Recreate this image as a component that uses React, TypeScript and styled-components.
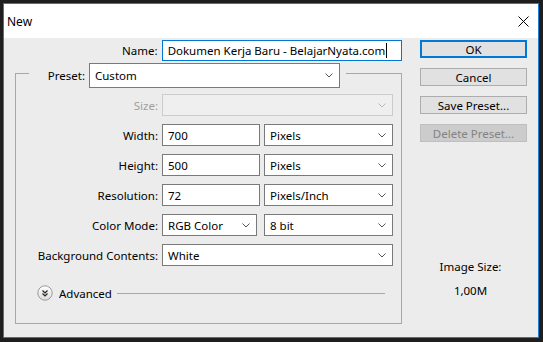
import React from "react";
import styled, { createGlobalStyle } from "styled-components";

const GlobalStyle = createGlobalStyle`
  html, body {
    margin: 0;
    padding: 0;
    background: #1e1e1e;
  }
  body {
    font-family: "Noto Sans", "Open Sans", sans-serif;
    font-size: 11.5px;
    color: #000;
  }
`;

const Frame = styled.div`
  width: 543px;
  height: 342px;
  box-sizing: border-box;
  padding: 3px 4px 4px 3px;
  background: #1e1e1e;
`;

const Dialog = styled.div`
  width: 536px;
  height: 335px;
  box-sizing: border-box;
  border: 1px solid #1a7fd4;
  background: #ececec;
  display: flex;
  flex-direction: column;
`;

const TitleBar = styled.div`
  height: 34px;
  flex-shrink: 0;
  background: #fff;
  display: flex;
  align-items: center;
  justify-content: space-between;
  padding: 0 9px 0 3px;
  font-size: 12px;
`;

const CloseIcon = styled.svg`
  width: 11px;
  height: 11px;
`;

const Body = styled.div`
  display: flex;
  padding: 1px 0 0 11px;
`;

const LeftCol = styled.div`
  width: 387px;
  display: flex;
  flex-direction: column;
`;

const Row = styled.div<{ $top?: number }>`
  display: flex;
  align-items: center;
  height: 22px;
  margin-top: ${(p) => p.$top ?? 8}px;
`;

const Label = styled.div<{ $w?: number; $disabled?: boolean }>`
  width: ${(p) => p.$w ?? 142}px;
  margin-right: 4px;
  text-align: right;
  white-space: nowrap;
  color: ${(p) => (p.$disabled ? "#a0a0a0" : "#000")};
`;

const Field = styled.div<{ $w: number; $h?: number; $focus?: boolean }>`
  width: ${(p) => p.$w}px;
  height: ${(p) => p.$h ?? 22}px;
  box-sizing: border-box;
  border: 1px solid ${(p) => (p.$focus ? "#0078d7" : "#7a7a7a")};
  background: #fff;
  display: flex;
  align-items: center;
  padding-left: 5px;
  white-space: nowrap;
`;

const Caret = styled.span`
  display: inline-block;
  width: 1px;
  height: 15px;
  margin-left: 1px;
  background: #000;
`;

const SelectBox = styled.div<{ $w: number; $h?: number; $gap?: number; $disabled?: boolean }>`
  width: ${(p) => p.$w}px;
  height: ${(p) => p.$h ?? 22}px;
  margin-left: ${(p) => p.$gap ?? 0}px;
  box-sizing: border-box;
  border: 1px solid ${(p) => (p.$disabled ? "#cccccc" : "#7a7a7a")};
  background: ${(p) => (p.$disabled ? "#efefef" : "#fff")};
  display: flex;
  align-items: center;
  justify-content: space-between;
  padding: 0 6px 0 5px;
  white-space: nowrap;
`;

const Chevron = styled.svg<{ $disabled?: boolean }>`
  width: 8px;
  height: 5px;
  flex-shrink: 0;
  stroke: ${(p) => (p.$disabled ? "#b8b8b8" : "#555")};
`;

const Group = styled.fieldset`
  margin: -3px 0 0 0;
  padding: 0 0 22px 0;
  border: 1px solid #a8a8a8;
  min-width: 0;
`;

const Legend = styled.legend`
  margin-left: 13px;
  padding: 5px 6px 0 0;
  display: flex;
  align-items: center;
`;

const AdvancedRow = styled.div`
  display: flex;
  align-items: center;
  height: 16px;
  margin: 19px 16px 0 21px;
`;

const AdvancedText = styled.span`
  margin-left: 6px;
  margin-right: 5px;
`;

const Rule = styled.div`
  flex: 1;
  height: 1px;
  background: #a8a8a8;
`;

const RightCol = styled.div`
  width: 107px;
  margin-left: 18px;
  padding-top: 1px;
  display: flex;
  flex-direction: column;
`;

const Button = styled.div<{ $primary?: boolean; $disabled?: boolean }>`
  height: 18px;
  margin-bottom: 10px;
  box-sizing: border-box;
  border: ${(p) => (p.$primary ? "2px solid #0078d7" : p.$disabled ? "1px solid #bfbfbf" : "1px solid #adadad")};
  background: ${(p) => (p.$disabled ? "#cccccc" : "#e1e1e1")};
  color: ${(p) => (p.$disabled ? "#838383" : "#000")};
  display: flex;
  align-items: center;
  justify-content: center;
`;

const SizeInfo = styled.div<{ $top: number }>`
  margin-top: ${(p) => p.$top}px;
  padding-right: 6px;
  text-align: center;
  line-height: 15px;
`;

const Chev = ({ disabled }: { disabled?: boolean }) => (
  <Chevron $disabled={disabled} viewBox="0 0 8 5" fill="none" strokeWidth={1}>
    <polyline points="0.5,0.5 4,4 7.5,0.5" />
  </Chevron>
);

const AdvancedIcon = () => (
  <svg width="16" height="16" viewBox="0 0 16 16">
    <defs>
      <linearGradient id="adv" x1="0" y1="0" x2="0" y2="1">
        <stop offset="0" stopColor="#ffffff" />
        <stop offset="1" stopColor="#dcdcdc" />
      </linearGradient>
    </defs>
    <circle cx="8" cy="8" r="7.2" fill="url(#adv)" stroke="#9a9a9a" strokeWidth="1" />
    <polyline points="5.5,5.5 8,8 10.5,5.5" fill="none" stroke="#222" strokeWidth="1.2" />
    <polyline points="5.5,8.5 8,11 10.5,8.5" fill="none" stroke="#222" strokeWidth="1.2" />
  </svg>
);

export default function App() {
  return (
    <Frame>
      <GlobalStyle />
      <Dialog>
        <TitleBar>
          <span>New</span>
          <CloseIcon viewBox="0 0 11 11">
            <line x1="0.5" y1="0.5" x2="10.5" y2="10.5" stroke="#000" strokeWidth="1" />
            <line x1="10.5" y1="0.5" x2="0.5" y2="10.5" stroke="#000" strokeWidth="1" />
          </CloseIcon>
        </TitleBar>
        <Body>
          <LeftCol>
            <Row $top={0}>
              <Label $w={143}>Name:</Label>
              <Field $w={241} $h={21} $focus>
                Dokumen Kerja Baru - BelajarNyata.com
                <Caret />
              </Field>
            </Row>
            <Group>
              <Legend>
                <Label $w={56}>Preset:</Label>
                <SelectBox $w={251} $h={25}>
                  Custom
                  <Chev />
                </SelectBox>
              </Legend>
              <Row $top={6}>
                <Label $disabled>Size:</Label>
                <SelectBox $w={231} $disabled>
                  <span />
                  <Chev disabled />
                </SelectBox>
              </Row>
              <Row>
                <Label>Width:</Label>
                <Field $w={98}>700</Field>
                <SelectBox $w={129} $gap={4}>
                  Pixels
                  <Chev />
                </SelectBox>
              </Row>
              <Row>
                <Label>Height:</Label>
                <Field $w={98}>500</Field>
                <SelectBox $w={129} $gap={4}>
                  Pixels
                  <Chev />
                </SelectBox>
              </Row>
              <Row>
                <Label>Resolution:</Label>
                <Field $w={98}>72</Field>
                <SelectBox $w={129} $gap={4}>
                  Pixels/Inch
                  <Chev />
                </SelectBox>
              </Row>
              <Row>
                <Label>Color Mode:</Label>
                <SelectBox $w={95}>
                  RGB Color
                  <Chev />
                </SelectBox>
                <SelectBox $w={129} $gap={7}>
                  8 bit
                  <Chev />
                </SelectBox>
              </Row>
              <Row>
                <Label>Background Contents:</Label>
                <SelectBox $w={231}>
                  White
                  <Chev />
                </SelectBox>
              </Row>
              <AdvancedRow>
                <AdvancedIcon />
                <AdvancedText>Advanced</AdvancedText>
                <Rule />
              </AdvancedRow>
            </Group>
          </LeftCol>
          <RightCol>
            <Button $primary>OK</Button>
            <Button>Cancel</Button>
            <Button>Save Preset...</Button>
            <Button $disabled>Delete Preset...</Button>
            <SizeInfo $top={107}>Image Size:</SizeInfo>
            <SizeInfo $top={9}>1,00M</SizeInfo>
          </RightCol>
        </Body>
      </Dialog>
    </Frame>
  );
}
